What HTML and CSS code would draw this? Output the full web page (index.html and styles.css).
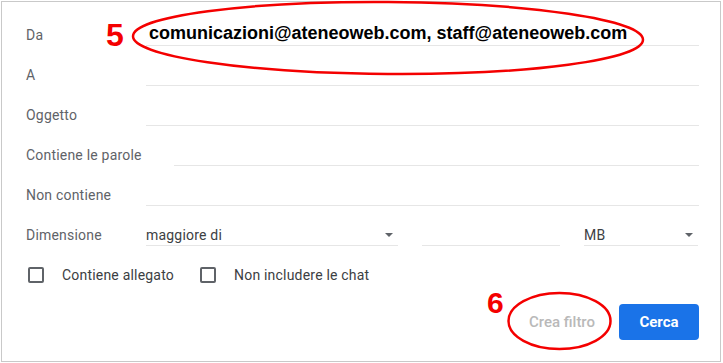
FILE: index.html
```html
<!DOCTYPE html>
<html lang="it">
<head>
    <meta charset="UTF-8">
    <title>Ricerca avanzata</title>
    <link rel="stylesheet" href="styles.css">
</head>
<body>
    <div class="dialog">
        <div class="row">
            <label class="label">Da</label>
            <div class="field"><span class="highlight">comunicazioni@ateneoweb.com, staff@ateneoweb.com</span></div>
        </div>
        <div class="row">
            <label class="label">A</label>
            <div class="field"></div>
        </div>
        <div class="row">
            <label class="label">Oggetto</label>
            <div class="field"></div>
        </div>
        <div class="row">
            <label class="label">Contiene le parole</label>
            <div class="field"></div>
        </div>
        <div class="row">
            <label class="label">Non contiene</label>
            <div class="field"></div>
        </div>
        <div class="row">
            <label class="label">Dimensione</label>
            <div class="size-fields">
                <div class="select select-op">maggiore di<span class="caret"></span></div>
                <div class="field field-num"></div>
                <div class="select select-unit">MB<span class="caret"></span></div>
            </div>
        </div>

        <div class="checks">
            <label class="check"><span class="box"></span>Contiene allegato</label>
            <label class="check"><span class="box"></span>Non includere le chat</label>
        </div>

        <div class="actions">
            <button class="btn-text" disabled>Crea filtro</button>
            <button class="btn-primary">Cerca</button>
        </div>

        <!-- annotazioni in rosso -->
        <svg class="marks" width="723" height="363" viewBox="0 0 723 363">
            <ellipse cx="388" cy="38" rx="255" ry="36" transform="rotate(0.4 388 38)" />
            <ellipse cx="559.5" cy="321" rx="51" ry="28" />
        </svg>
        <span class="mark-num mark-5">5</span>
        <span class="mark-num mark-6">6</span>
    </div>
</body>
</html>
```

FILE: styles.css
```css
:root {
    --label: #5f6368;
    --text: #202124;
    --line: #e6e6e6;
    --blue: #1a73e8;
    --red: #f40000;
}

* {
    margin: 0;
    padding: 0;
    box-sizing: border-box;
}

body {
    background: #fff;
    font-family: Roboto, 'Liberation Sans', Arial, sans-serif;
    font-size: 14px;
    letter-spacing: 0.2px;
    color: var(--text);
}

.dialog {
    position: relative;
    margin: 1px 0 0 1px;
    width: 720px;
    height: 361px;
    border: 1px solid #c9c9c9;
    padding: 4px 21px 0 24px;
}

.row {
    display: flex;
    align-items: flex-end;
    height: 40px;
}

.label {
    min-width: 88px;
    margin-right: 32px;
    line-height: 20px;
    padding-bottom: 1px;
    color: var(--label);
    white-space: nowrap;
}

.field {
    flex: 1;
    height: 21px;
    border-bottom: 1px solid var(--line);
    position: relative;
}

.highlight {
    position: absolute;
    left: 3px;
    bottom: 2px;
    font-family: 'Liberation Sans', Arial, sans-serif;
    font-weight: bold;
    font-size: 18px;
    letter-spacing: 0;
    line-height: 20px;
    color: #000;
    white-space: nowrap;
}

.size-fields {
    flex: 1;
    display: flex;
    gap: 24px;
}

.select {
    position: relative;
    height: 21px;
    line-height: 20px;
    border-bottom: 1px solid var(--line);
    color: #3c4043;
}

.select-op {
    width: 252px;
}

.field-num {
    flex: none;
    width: 138px;
}

.select-unit {
    width: 114px;
}

.caret {
    position: absolute;
    right: 5px;
    top: 8px;
    border-left: 4px solid transparent;
    border-right: 4px solid transparent;
    border-top: 4px solid #5f6368;
}

.checks {
    display: flex;
    gap: 26px;
    margin-top: 19px;
    margin-left: 2px;
    height: 20px;
    align-items: center;
}

.check {
    display: flex;
    align-items: center;
    gap: 18px;
    color: #3c4043;
}

.box {
    width: 16px;
    height: 16px;
    border: 2px solid #5f6368;
    border-radius: 2px;
}

.actions {
    display: flex;
    justify-content: flex-end;
    gap: 8px;
    margin-top: 19px;
}

.actions button {
    height: 36px;
    border: none;
    border-radius: 4px;
    font-family: Roboto, 'Liberation Sans', Arial, sans-serif;
    font-size: 15px;
    font-weight: 500;
    letter-spacing: 0;
    padding: 0 16px;
    background: none;
}

.btn-text {
    color: #b9b9b9;
}

.btn-primary {
    width: 80px;
    background: var(--blue) !important;
    color: #fff;
    font-weight: 700 !important;
}

.marks {
    position: absolute;
    left: -2px;
    top: -2px;
    pointer-events: none;
}

.marks ellipse {
    fill: none;
    stroke: var(--red);
    stroke-width: 2.5;
}

.mark-num {
    position: absolute;
    font-family: 'Liberation Sans', Arial, sans-serif;
    font-weight: bold;
    color: var(--red);
    line-height: 1;
    letter-spacing: 0;
}

.mark-5 {
    left: 104px;
    top: 17px;
    font-size: 32px;
}

.mark-6 {
    left: 485px;
    top: 286px;
    font-size: 30px;
}
```
